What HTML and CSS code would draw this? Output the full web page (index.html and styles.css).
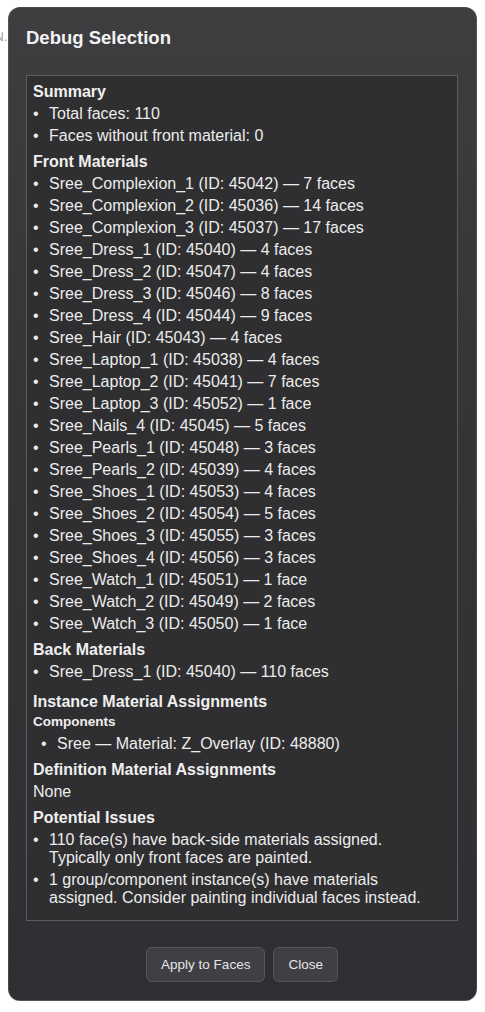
FILE: index.html
```html
<!DOCTYPE html>
<html lang="en">
<head>
<meta charset="utf-8">
<title>Debug Selection</title>
<link rel="stylesheet" href="styles.css">
</head>
<body>
<span class="behind">N.</span>
<div class="dialog">
  <h1 class="title">Debug Selection</h1>
  <div class="panel">
    <h3 class="sec first">Summary</h3>
    <ul class="list">
      <li>Total faces: 110</li>
      <li>Faces without front material: 0</li>
    </ul>
    <h3 class="sec">Front Materials</h3>
    <ul class="list">
      <li>Sree_Complexion_1 (ID: 45042) — 7 faces</li>
      <li>Sree_Complexion_2 (ID: 45036) — 14 faces</li>
      <li>Sree_Complexion_3 (ID: 45037) — 17 faces</li>
      <li>Sree_Dress_1 (ID: 45040) — 4 faces</li>
      <li>Sree_Dress_2 (ID: 45047) — 4 faces</li>
      <li>Sree_Dress_3 (ID: 45046) — 8 faces</li>
      <li>Sree_Dress_4 (ID: 45044) — 9 faces</li>
      <li>Sree_Hair (ID: 45043) — 4 faces</li>
      <li>Sree_Laptop_1 (ID: 45038) — 4 faces</li>
      <li>Sree_Laptop_2 (ID: 45041) — 7 faces</li>
      <li>Sree_Laptop_3 (ID: 45052) — 1 face</li>
      <li>Sree_Nails_4 (ID: 45045) — 5 faces</li>
      <li>Sree_Pearls_1 (ID: 45048) — 3 faces</li>
      <li>Sree_Pearls_2 (ID: 45039) — 4 faces</li>
      <li>Sree_Shoes_1 (ID: 45053) — 4 faces</li>
      <li>Sree_Shoes_2 (ID: 45054) — 5 faces</li>
      <li>Sree_Shoes_3 (ID: 45055) — 3 faces</li>
      <li>Sree_Shoes_4 (ID: 45056) — 3 faces</li>
      <li>Sree_Watch_1 (ID: 45051) — 1 face</li>
      <li>Sree_Watch_2 (ID: 45049) — 2 faces</li>
      <li>Sree_Watch_3 (ID: 45050) — 1 face</li>
    </ul>
    <h3 class="sec">Back Materials</h3>
    <ul class="list">
      <li>Sree_Dress_1 (ID: 45040) — 110 faces</li>
    </ul>
    <h3 class="sec sec-wide">Instance Material Assignments</h3>
    <h4 class="sub">Components</h4>
    <ul class="list list-indent">
      <li>Sree — Material: Z_Overlay (ID: 48880)</li>
    </ul>
    <h3 class="sec">Definition Material Assignments</h3>
    <p class="plain">None</p>
    <h3 class="sec">Potential Issues</h3>
    <ul class="list">
      <li>110 face(s) have back-side materials assigned. Typically only front faces are painted.</li>
      <li>1 group/component instance(s) have materials assigned. Consider painting individual faces instead.</li>
    </ul>
  </div>
  <div class="actions">
    <button class="btn" type="button">Apply to Faces</button>
    <button class="btn" type="button">Close</button>
  </div>
</div>
</body>
</html>
```

FILE: styles.css
```css
html, body {
  margin: 0;
  padding: 0;
  background: #ffffff;
}

body {
  font-family: "Liberation Sans", Arial, Helvetica, sans-serif;
  position: relative;
}

.behind {
  position: absolute;
  left: -5px;
  top: 30px;
  font-size: 12px;
  color: #9a9a9a;
}

.dialog {
  position: relative;
  margin: 7px 0 0 8px;
  width: 469px;
  height: 994px;
  box-sizing: border-box;
  border-radius: 12px;
  border: 1px solid rgba(255, 255, 255, 0.12);
  background: linear-gradient(to bottom, #3e3e40 0%, #353537 40%, #2f2f33 100%);
  padding: 19px 18px 0 17px;
  color: #ececec;
}

.title {
  margin: 0;
  font-size: 18.5px;
  line-height: 21px;
  font-weight: bold;
  color: #f2f2f2;
}

.panel {
  margin-top: 27px;
  border: 1px solid #5c5c5e;
  background: #2f2f31;
  padding: 7px 18px 13px 6px;
}

.sec {
  margin: 8px 0 0;
  font-size: 16px;
  line-height: 18px;
  font-weight: bold;
  color: #efefef;
}

.sec.first {
  margin-top: 0;
}

.sec.sec-wide {
  margin-top: 12px;
}

.sub {
  margin: 2px 0 0;
  font-size: 13.5px;
  line-height: 18px;
  font-weight: bold;
  color: #efefef;
}

.list {
  list-style: none;
  margin: 4px 0 0;
  padding: 0;
}

.list li {
  display: flex;
  font-size: 16px;
  line-height: 18px;
  color: #ececec;
}

.list li + li {
  margin-top: 4px;
}

.list li::before {
  content: "•";
  flex: 0 0 16px;
}

.list-indent {
  padding-left: 8px;
}

.plain {
  margin: 4px 0 0;
  font-size: 16px;
  line-height: 18px;
  color: #ececec;
}

.actions {
  display: flex;
  justify-content: center;
  gap: 8px;
  margin-top: 26px;
}

.btn {
  height: 35px;
  padding: 0 14px;
  border: 1px solid #56565c;
  border-radius: 6px;
  background: #3f3f45;
  color: #e6e6e6;
  font-family: "Liberation Sans", Arial, Helvetica, sans-serif;
  font-size: 13.5px;
}
```
